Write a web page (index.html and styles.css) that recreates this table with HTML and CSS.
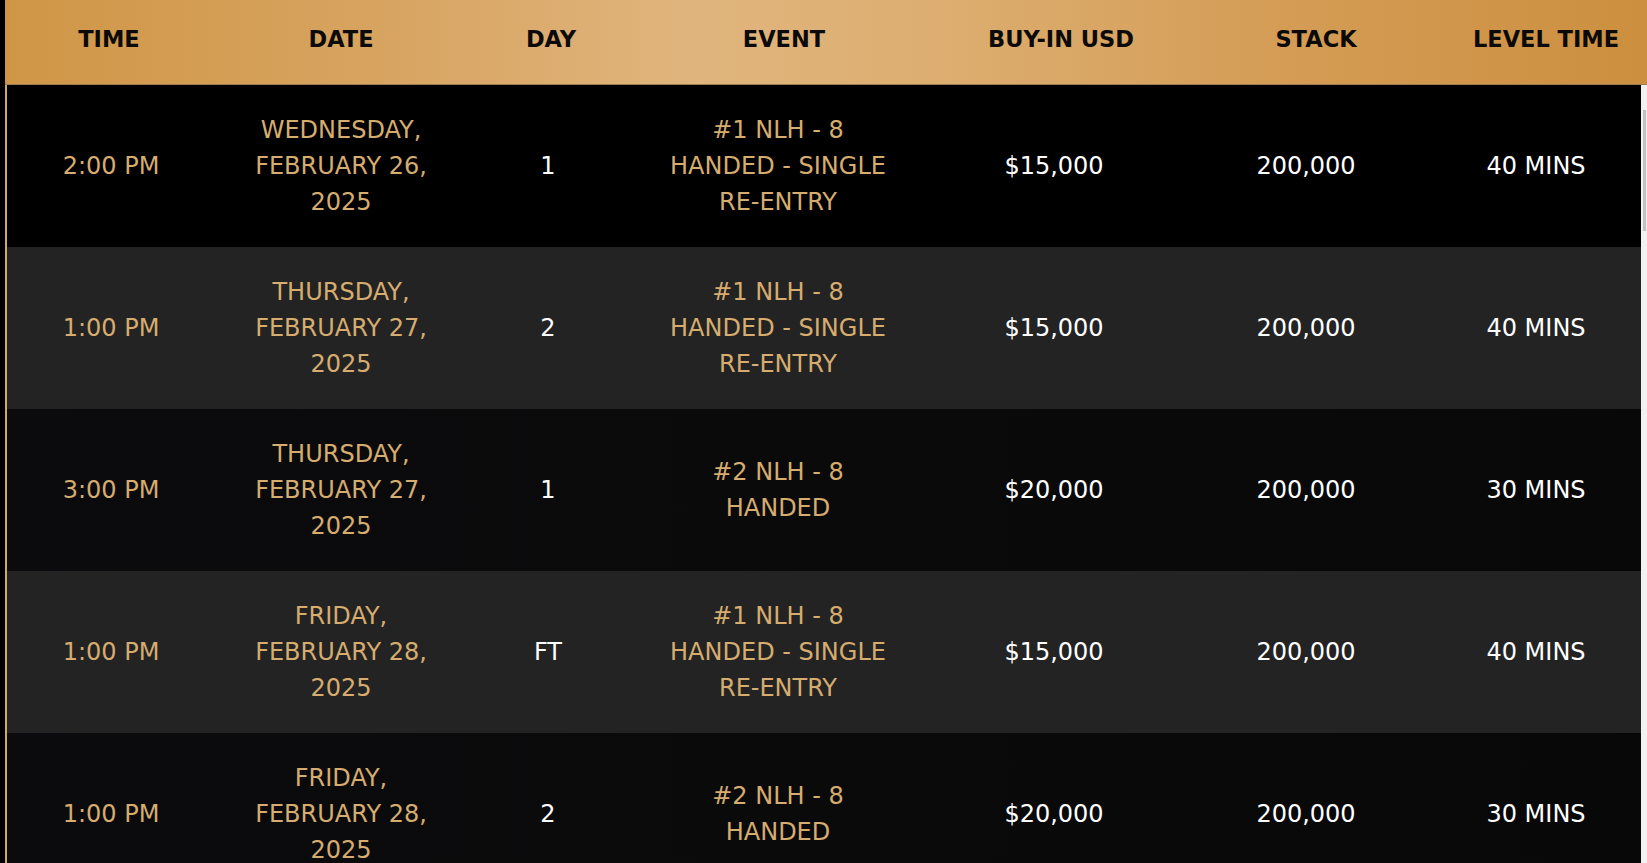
FILE: index.html
```html
<!DOCTYPE html>
<html lang="en">
<head>
<meta charset="utf-8">
<title>Tournament Schedule</title>
<link rel="stylesheet" href="styles.css">
</head>
<body>
<div class="schedule">
  <div class="thead">
    <div class="th">TIME</div>
    <div class="th">DATE</div>
    <div class="th">DAY</div>
    <div class="th">EVENT</div>
    <div class="th">BUY-IN USD</div>
    <div class="th">STACK</div>
    <div class="th">LEVEL TIME</div>
  </div>
  <div class="tbody-wrap">
    <div class="rows">
      <div class="row black">
        <div class="gold">2:00 PM</div>
        <div class="gold">WEDNESDAY,<br>FEBRUARY 26,<br>2025</div>
        <div class="white">1</div>
        <div class="gold">#1 NLH - 8<br>HANDED - SINGLE<br>RE-ENTRY</div>
        <div class="white">$15,000</div>
        <div class="white">200,000</div>
        <div class="white">40 MINS</div>
      </div>
      <div class="row grey">
        <div class="gold">1:00 PM</div>
        <div class="gold">THURSDAY,<br>FEBRUARY 27,<br>2025</div>
        <div class="white">2</div>
        <div class="gold">#1 NLH - 8<br>HANDED - SINGLE<br>RE-ENTRY</div>
        <div class="white">$15,000</div>
        <div class="white">200,000</div>
        <div class="white">40 MINS</div>
      </div>
      <div class="row dark">
        <div class="gold">3:00 PM</div>
        <div class="gold">THURSDAY,<br>FEBRUARY 27,<br>2025</div>
        <div class="white">1</div>
        <div class="gold">#2 NLH - 8<br>HANDED</div>
        <div class="white">$20,000</div>
        <div class="white">200,000</div>
        <div class="white">30 MINS</div>
      </div>
      <div class="row grey">
        <div class="gold">1:00 PM</div>
        <div class="gold">FRIDAY,<br>FEBRUARY 28,<br>2025</div>
        <div class="white">FT</div>
        <div class="gold">#1 NLH - 8<br>HANDED - SINGLE<br>RE-ENTRY</div>
        <div class="white">$15,000</div>
        <div class="white">200,000</div>
        <div class="white">40 MINS</div>
      </div>
      <div class="row dark">
        <div class="gold">1:00 PM</div>
        <div class="gold">FRIDAY,<br>FEBRUARY 28,<br>2025</div>
        <div class="white">2</div>
        <div class="gold">#2 NLH - 8<br>HANDED</div>
        <div class="white">$20,000</div>
        <div class="white">200,000</div>
        <div class="white">30 MINS</div>
      </div>
    </div>
    <div class="scrollbar"><div class="thumb"></div></div>
  </div>
</div>
</body>
</html>
```
FILE: styles.css
```css
html, body {
  margin: 0;
  padding: 0;
  height: 100%;
}
body {
  background: #000;
  overflow: hidden;
  font-family: "DejaVu Sans", "Liberation Sans", sans-serif;
}
.schedule {
  padding-left: 5px;
  height: 100%;
  display: flex;
  flex-direction: column;
}
.thead {
  display: grid;
  grid-template-columns: 208px 256px 164px 302px 252px 258px 202px;
  height: 84px;
  align-items: center;
  background: linear-gradient(90deg, #cf9646 0%, #d7a35f 22%, #e0b57d 42%, #dcad6f 58%, #d49c55 78%, #cc8f3f 100%);
  border-bottom: 1px solid #9c7c55;
  flex: none;
}
.th {
  text-align: center;
  font-weight: bold;
  font-size: 22.5px;
  color: #0c0a08;
  padding-bottom: 6px;
}
.tbody-wrap {
  display: flex;
  flex: 1;
  border-left: 2px solid #d5a862;
  min-height: 0;
}
.rows {
  flex: 1;
  overflow: hidden;
}
.row {
  display: grid;
  grid-template-columns: 208px 252px 162px 298px 254px 250px 210px;
  height: 162px;
  align-items: center;
  text-align: center;
  font-size: 24px;
  line-height: 36px;
}
.row.black { background: #000; }
.row.grey { background: #232323; }
.row.dark { background: linear-gradient(90deg, #0b0b0d 0%, #0a0a0b 50%, #080809 100%); }
.gold { color: #d6ac6f; }
.white { color: #fff; }
.scrollbar {
  width: 6px;
  background: #f1f1f1;
  flex: none;
}
.thumb {
  margin: 25px 0 0 2px;
  width: 3px;
  height: 121px;
  background: #c1c1c1;
}
```
